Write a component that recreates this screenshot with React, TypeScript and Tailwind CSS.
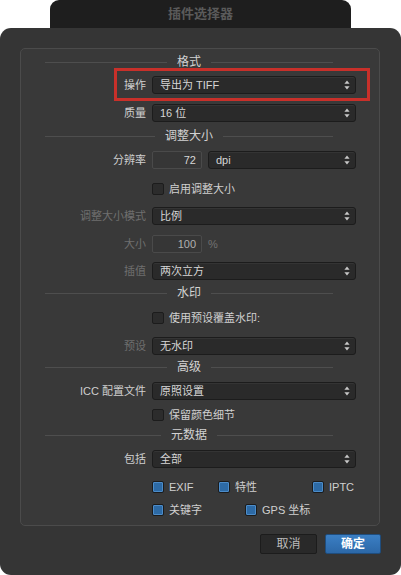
import React from 'react';

const FONT = "font-['Liberation_Sans','Noto_Sans_CJK_SC',sans-serif]";

function UpDown() {
  return (
    <svg width="6" height="10" viewBox="0 0 6 10" className="shrink-0">
      <path d="M3 0.5 L5.6 3.8 L0.4 3.8 Z" fill="#c9c9c9" />
      <path d="M3 9.5 L5.6 6.2 L0.4 6.2 Z" fill="#c9c9c9" />
    </svg>
  );
}

function Select({ value }: { value: string }) {
  return (
    <div className="flex-1 h-[18px] flex items-center justify-between rounded-[3px] border border-[#1c1c1c] bg-[#2a2a2a] pl-[7px] pr-[5px] text-[11px] text-[#d6d6d6] shadow-[inset_0_1px_0_rgba(255,255,255,0.05)]">
      <span>{value}</span>
      <UpDown />
    </div>
  );
}

function Field({ value, dim }: { value: string; dim?: boolean }) {
  return (
    <div
      className={`w-[50px] h-[18px] flex items-center justify-end pr-[5px] rounded-[2px] border border-[#4a4a4a] bg-[#363636] text-[11px] ${
        dim ? 'text-[#b0b0b0]' : 'text-[#d6d6d6]'
      }`}
    >
      {value}
    </div>
  );
}

function Check({ checked, label }: { checked?: boolean; label: string }) {
  return (
    <div className="flex items-center gap-[5px]">
      <div
        className={`w-[12px] h-[12px] rounded-[2px] border ${
          checked
            ? 'border-[#1b1b1b] bg-[#2d6aa5] shadow-[inset_0_0_0_1px_#4c8cc9]'
            : 'border-[#1c1c1c] bg-[#2c2c2c]'
        }`}
      />
      <span className="text-[11px] text-[#d0d0d0] leading-none">{label}</span>
    </div>
  );
}

function Header({ title, mt }: { title: string; mt: string }) {
  return (
    <div className={`flex items-center h-[16px] ml-[24px] mr-[23px] gap-[10px] ${mt}`}>
      <div className="flex-1 h-px bg-[#4e4e4e]" />
      <span className="text-[12px] text-[#d2d2d2]">{title}</span>
      <div className="flex-1 h-px bg-[#4e4e4e]" />
    </div>
  );
}

function Row({ label, dim, mt, children }: { label: string; dim?: boolean; mt: string; children: React.ReactNode }) {
  return (
    <div className={`flex items-center h-[18px] gap-[6px] ${mt}`}>
      <div className={`w-[125px] text-right text-[11px] ${dim ? 'text-[#6f6f6f]' : 'text-[#cfcfcf]'}`}>{label}</div>
      {children}
    </div>
  );
}

export default function App() {
  return (
    <div className={`w-[401px] h-[575px] bg-white flex flex-col ${FONT}`}>
      {/* title tab */}
      <div className="mx-[50px] h-[28px] shrink-0 rounded-t-[9px] bg-[#1e1e1e] flex items-center justify-center">
        <span className="text-[13px] font-semibold text-[#5a5a5a]">插件选择器</span>
      </div>

      {/* dialog */}
      <div className="flex-1 rounded-[11px] bg-[#353535] pl-[20px] pr-[21px] pt-[20px] flex flex-col">
        <div className="relative rounded-[5px] border border-[#4b4b4b] bg-[#393939] pr-[23px] pb-[9px] flex flex-col">
          <Header title="格式" mt="mt-[5px]" />
          <Row label="操作" mt="mt-[6px]">
            <Select value="导出为 TIFF" />
          </Row>
          <Row label="质量" mt="mt-[10px]">
            <Select value="16 位" />
          </Row>

          <Header title="调整大小" mt="mt-[6px]" />
          <Row label="分辨率" mt="mt-[7px]">
            <Field value="72" />
            <Select value="dpi" />
          </Row>
          <div className="flex items-center h-[12px] pl-[131px] mt-[14px]">
            <Check label="启用调整大小" />
          </div>
          <Row label="调整大小模式" dim mt="mt-[12px]">
            <Select value="比例" />
          </Row>
          <Row label="大小" dim mt="mt-[10px]">
            <Field value="100" dim />
            <span className="text-[11px] text-[#727272]">%</span>
          </Row>
          <Row label="插值" dim mt="mt-[9px]">
            <Select value="两次立方" />
          </Row>

          <Header title="水印" mt="mt-[5px]" />
          <div className="flex items-center h-[12px] pl-[131px] mt-[11px]">
            <Check label="使用预设覆盖水印:" />
          </div>
          <Row label="预设" dim mt="mt-[13px]">
            <Select value="无水印" />
          </Row>

          <Header title="高级" mt="mt-[4px]" />
          <Row label="ICC 配置文件" mt="mt-[7px]">
            <Select value="原照设置" />
          </Row>
          <div className="flex items-center h-[12px] pl-[131px] mt-[9px]">
            <Check label="保留颜色细节" />
          </div>

          <Header title="元数据" mt="mt-[6px]" />
          <Row label="包括" mt="mt-[7px]">
            <Select value="全部" />
          </Row>
          <div className="flex items-center h-[12px] pl-[131px] mt-[13px]">
            <div className="w-[66px]">
              <Check checked label="EXIF" />
            </div>
            <div className="w-[94px]">
              <Check checked label="特性" />
            </div>
            <Check checked label="IPTC" />
          </div>
          <div className="flex items-center h-[12px] pl-[131px] mt-[11px]">
            <div className="w-[93px]">
              <Check checked label="关键字" />
            </div>
            <Check checked label="GPS 坐标" />
          </div>

          {/* highlight annotation */}
          <div className="absolute left-[93px] top-[19px] w-[256px] h-[33px] border-[3px] border-[#c8302a]" />
        </div>

        <div className="flex justify-end gap-[8px] mt-[8px] mr-[-1px]">
          <div className="w-[57px] h-[20px] flex items-center justify-center rounded-[2px] border border-[#1c1c1c] bg-[#292929] text-[12px] text-[#bdbdbd]">
            取消
          </div>
          <div className="w-[56px] h-[20px] flex items-center justify-center rounded-[2px] border border-[#1f4d7d] bg-gradient-to-b from-[#3b7fc4] to-[#2c68a8] text-[12px] font-semibold text-white">
            确定
          </div>
        </div>
      </div>
    </div>
  );
}
